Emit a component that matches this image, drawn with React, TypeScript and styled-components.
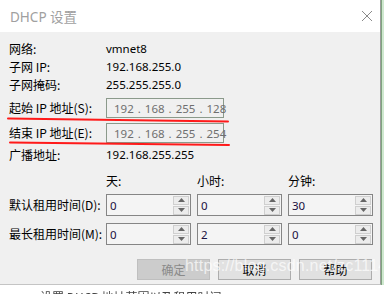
import React from 'react';
import styled, { createGlobalStyle } from 'styled-components';

const GlobalStyle = createGlobalStyle`
  html, body {
    margin: 0;
    padding: 0;
    background: #ffffff;
  }
  body {
    font-family: "Noto Sans CJK SC", "Noto Sans", sans-serif;
    font-size: 12px;
    color: #000;
  }
`;

function App() {
	return (
		<>
			<GlobalStyle />
			<Screen>
				<Dialog>
					<TitleBar>
						<Title>DHCP 设置</Title>
						<CloseButton aria-label="close">
							<svg width="12" height="12" viewBox="0 0 12 12">
								<path d="M1 1 L11 11 M11 1 L1 11" stroke="#8a8a8a" strokeWidth="1" fill="none" />
							</svg>
						</CloseButton>
					</TitleBar>
					<Body>
						<InfoRow>
							<Label>网络:</Label>
							<Value>vmnet8</Value>
						</InfoRow>
						<InfoRow>
							<Label>子网 IP:</Label>
							<Value>192.168.255.0</Value>
						</InfoRow>
						<InfoRow>
							<Label>子网掩码:</Label>
							<Value>255.255.255.0</Value>
						</InfoRow>

						<IpRow top={4}>
							<Label>起始 IP 地址(S):</Label>
							<IpBox>
								<span>192</span><Dot>.</Dot><span>168</span><Dot>.</Dot><span>255</span><Dot>.</Dot><span>128</span>
							</IpBox>
						</IpRow>
						<IpRow top={5}>
							<Label>结束 IP 地址(E):</Label>
							<IpBox>
								<span>192</span><Dot>.</Dot><span>168</span><Dot>.</Dot><span>255</span><Dot>.</Dot><span>254</span>
							</IpBox>
						</IpRow>

						<InfoRow top={3}>
							<Label>广播地址:</Label>
							<Value>192.168.255.255</Value>
						</InfoRow>

						<LeaseGrid>
							<span />
							<ColHead>天:</ColHead>
							<ColHead>小时:</ColHead>
							<ColHead>分钟:</ColHead>

							<LeaseLabel>默认租用时间(D):</LeaseLabel>
							<Spinner value="0" />
							<Spinner value="0" />
							<Spinner value="30" />

							<LeaseLabel>最长租用时间(M):</LeaseLabel>
							<Spinner value="0" />
							<Spinner value="2" />
							<Spinner value="0" />
						</LeaseGrid>

						<ButtonRow>
							<DlgButton disabled>确定</DlgButton>
							<DlgButton>取消</DlgButton>
							<DlgButton>帮助</DlgButton>
						</ButtonRow>

						<Marks width="240" height="130" viewBox="0 0 240 130">
							<path d="M8 86.5 Q120 88 228 89.5" stroke="#ff1a1a" strokeWidth="2" fill="none" strokeLinecap="round" />
							<path d="M10 110.5 Q120 112 229 113" stroke="#ff1a1a" strokeWidth="2" fill="none" strokeLinecap="round" />
						</Marks>
						<Watermark>https://blog.csdn.net/zc1114</Watermark>
					</Body>
				</Dialog>
				<SideStrip />
			</Screen>
			<Below>
				<Faded>设置 DHCP 地址范围以及租用时间</Faded>
			</Below>
		</>
	);
}

function Spinner({ value }: { value: string }) {
	return (
		<SpinBox>
			<SpinText>{value}</SpinText>
			<SpinButtons>
				<SpinBtn>
					<svg width="7" height="4" viewBox="0 0 7 4"><path d="M0 4 L3.5 0 L7 4 Z" fill="#666" /></svg>
				</SpinBtn>
				<SpinBtn>
					<svg width="7" height="4" viewBox="0 0 7 4"><path d="M0 0 L3.5 4 L7 0 Z" fill="#666" /></svg>
				</SpinBtn>
			</SpinButtons>
		</SpinBox>
	);
}

const Screen = styled.div`
  display: flex;
  width: 385px;
  height: 285px;
`;

const Dialog = styled.div`
  width: 381px;
  height: 285px;
  display: flex;
  flex-direction: column;
  border-right: 1px solid #9c9c9c;
  border-bottom: 1px solid #c4c4c4;
  box-sizing: border-box;
`;

const TitleBar = styled.div`
  height: 32px;
  flex: 0 0 32px;
  background: #ffffff;
  display: flex;
  align-items: center;
  justify-content: space-between;
  padding: 0 7px 0 10px;
`;

const Title = styled.div`
  font-family: "Noto Sans", "Noto Sans CJK SC", sans-serif;
  font-size: 13.5px;
  color: #a0a0a0;
  padding-bottom: 1px;
`;

const CloseButton = styled.div`
  width: 12px;
  height: 12px;
  display: flex;
`;

const Body = styled.div`
  position: relative;
  flex: 1;
  background: #f0f0f0;
  padding: 8px 8px 0 9px;
  overflow: hidden;
`;

const InfoRow = styled.div<{ top?: number }>`
  display: grid;
  grid-template-columns: 97px 1fr;
  align-items: center;
  height: 18px;
  margin-top: ${(p) => p.top || 0}px;
`;

const Label = styled.span`
  white-space: nowrap;
  line-height: 18px;
`;

const Value = styled.span`
  font-family: "Noto Sans", sans-serif;
  font-size: 11.5px;
  line-height: 18px;
`;

const IpRow = styled.div<{ top: number }>`
  display: grid;
  grid-template-columns: 97px 118px;
  align-items: center;
  height: 20px;
  margin-top: ${(p) => p.top}px;
`;

const IpBox = styled.div`
  height: 20px;
  box-sizing: border-box;
  border: 1px solid #8b9a8b;
  background: #f0f0f0;
  color: #6f6f6f;
  font-family: "Noto Sans", sans-serif;
  font-size: 11.5px;
  display: flex;
  align-items: center;
  padding-left: 7px;
`;

const Dot = styled.span`
  margin: 0 4px;
`;

const LeaseGrid = styled.div`
  display: grid;
  grid-template-columns: 91px 85px 85px 85px;
  grid-template-rows: 18px 26px 29px;
  column-gap: 6px;
  margin-top: 8px;
  align-items: end;
`;

const ColHead = styled.span`
  line-height: 18px;
`;

const LeaseLabel = styled.span`
  white-space: nowrap;
  line-height: 22px;
`;

const SpinBox = styled.div`
  height: 22px;
  box-sizing: border-box;
  border: 1px solid #858585;
  background: #f4f4f4;
  display: flex;
  align-items: center;
  justify-content: space-between;
  padding: 0 1px 0 3px;
`;

const SpinText = styled.span`
  font-family: "Noto Sans", sans-serif;
  font-size: 11.5px;
  color: #1a1040;
`;

const SpinButtons = styled.div`
  display: flex;
  flex-direction: column;
  gap: 1px;
`;

const SpinBtn = styled.div`
  width: 16px;
  height: 9px;
  box-sizing: border-box;
  border: 1px solid #cfcfcf;
  background: #ececec;
  display: flex;
  align-items: center;
  justify-content: center;
`;

const ButtonRow = styled.div`
  display: flex;
  justify-content: flex-end;
  gap: 8px;
  margin-top: 14px;
`;

const DlgButton = styled.button`
  width: 73px;
  height: 21px;
  padding: 0;
  font-family: "Noto Sans CJK SC", sans-serif;
  font-size: 12px;
  color: ${(p) => (p.disabled ? '#8a8a8a' : '#000')};
  background: ${(p) => (p.disabled ? '#cccccc' : '#e1e1e1')};
  border: 1px solid ${(p) => (p.disabled ? '#bfbfbf' : '#adadad')};
  border-radius: 0;
`;

const Marks = styled.svg`
  position: absolute;
  left: 0;
  top: 0;
  pointer-events: none;
`;

const Watermark = styled.div`
  position: absolute;
  left: 185px;
  top: 225px;
  font-family: "Liberation Sans", Arial, sans-serif;
  font-size: 16px;
  color: rgba(255, 255, 255, 0.7);
  letter-spacing: 0.2px;
  white-space: nowrap;
  pointer-events: none;
`;

const SideStrip = styled.div`
  width: 3px;
  background: #cfe8cf;
  border-left: 1px solid #7fa37f;
  box-sizing: border-box;
`;

const Below = styled.div`
  height: 9px;
  overflow: hidden;
  background: #fff;
  padding-left: 40px;
`;

const Faded = styled.div`
  font-size: 12px;
  line-height: 12px;
  color: #444;
  margin-top: 6px;
  filter: blur(0.4px);
`;

export default App;
